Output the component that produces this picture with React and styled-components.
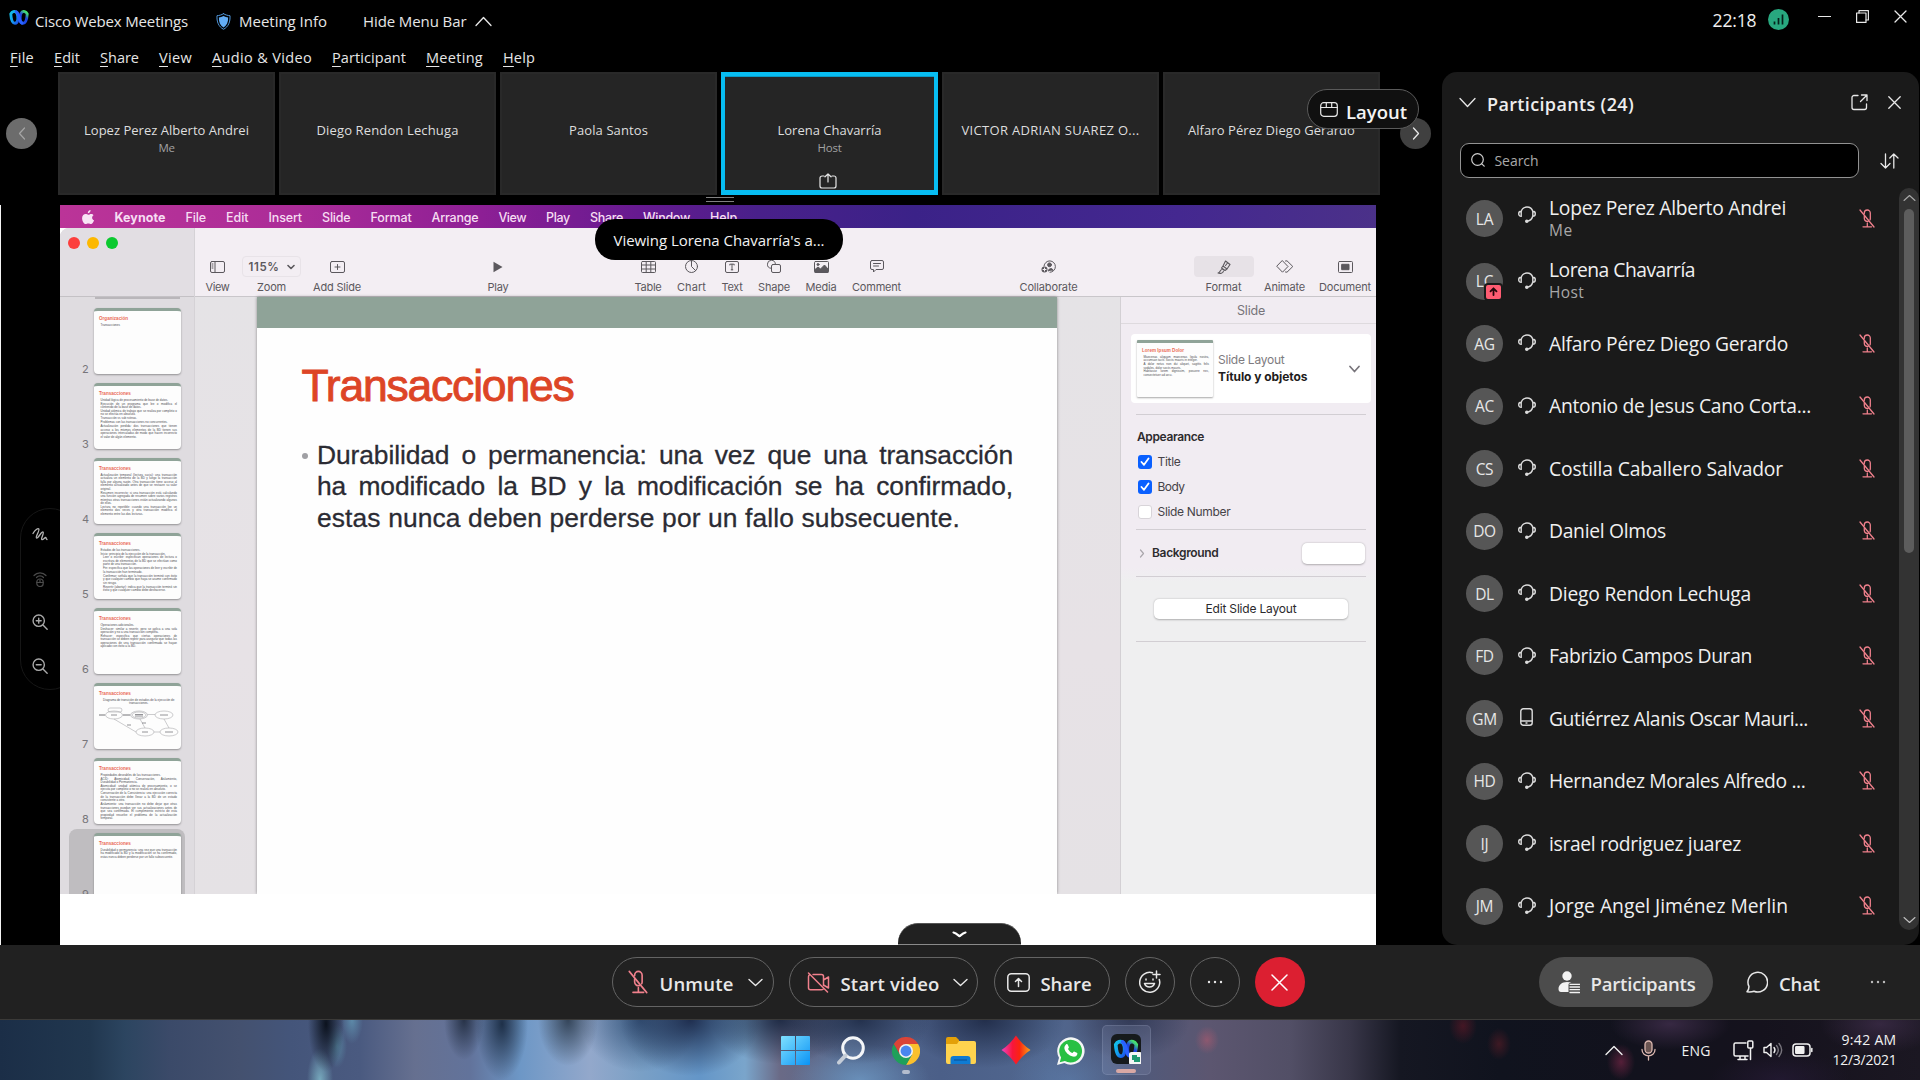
import React, { useLayoutEffect, useRef, useState } from "react";
import styled, { createGlobalStyle, css } from "styled-components";

const Global = createGlobalStyle`
  *, *::before, *::after { box-sizing: border-box; }
  html, body { margin: 0; background: #000; overflow: hidden; }
  body { font-family: "Open Sans", "Noto Sans", sans-serif; color: #e6e6e6; }
  svg { display: block; flex: none; }
`;

/* ---------- text that tracks itself to a given width ---------- */

const FitSpan = styled.span`
  display: inline-block;
  white-space: pre;
  flex: none;
`;

function Fit({ w, children, className }) {
  const ref = useRef(null);
  const [spacing, setSpacing] = useState(null);
  useLayoutEffect(() => {
    if (!w) return;
    const natural = ref.current.getBoundingClientRect().width;
    setSpacing((w - natural) / ref.current.textContent.length);
  }, [w]);
  return (
    <FitSpan ref={ref} className={className} style={spacing === null ? undefined : { letterSpacing: spacing }}>
      {children}
    </FitSpan>
  );
}

function Icon({ w = 16, h = w, vb, stroke = "#e8e8e8", sw = 1.4, fill = "none", children }) {
  return (
    <svg width={w} height={h} viewBox={vb || `0 0 ${w} ${h}`} fill={fill} stroke={stroke} strokeWidth={sw} strokeLinecap="round" strokeLinejoin="round">
      {children}
    </svg>
  );
}

/* ---------- frame ---------- */

const Screen = styled.div`
  width: 1920px;
  height: 1080px;
  display: flex;
  flex-direction: column;
  background: #000;
  overflow: hidden;
`;
const TitleBar = styled.header`
  height: 42px;
  display: flex;
  align-items: center;
  font-size: 15px;
  font-weight: 500;
  padding-left: 9px;
`;
const TitleItem = styled.div`
  display: flex;
  align-items: center;
  gap: ${(p) => p.$gap || 8}px;
  margin-left: ${(p) => p.$ml || 0}px;
`;
const LogoLift = styled.div`
  padding-bottom: 8px;
`;
const Clock = styled(Fit)`
  font-size: 17.5px;
  font-weight: 400;
  color: #f0f0f0;
  margin-left: auto;
  padding-bottom: 2px;
`;
const WindowControls = styled.div`
  display: flex;
  gap: 25px;
  margin: 0 13.5px 9px 29px;
  align-items: center;
`;
const Signal = styled.div`
  margin: 0 0 3px 11px;
`;
const MenuRow = styled.nav`
  height: 30px;
  display: flex;
  align-items: center;
  gap: 20px;
  padding-left: 10px;
  font-size: 14.5px;
  font-weight: 500;
`;
const Mnemonic = styled.span`
  text-decoration: underline;
  text-underline-offset: 3px;
  text-decoration-thickness: 1px;
`;
const Main = styled.main`
  height: 873px;
  display: flex;
`;
const Stage = styled.section`
  width: 1442px;
  display: flex;
  flex-direction: column;
  position: relative;
`;

/* ---------- film strip ---------- */

const Strip = styled.div`
  height: 123px;
  display: flex;
  align-items: center;
`;
const PrevButton = styled.div`
  width: 31px;
  height: 31px;
  margin: 0 21px 0 6px;
  border-radius: 50%;
  background: #6c6c6c;
  display: grid;
  place-items: center;
`;
const Tiles = styled.div`
  display: grid;
  grid-template-columns: repeat(6, 217px);
  gap: 4px;
  height: 123px;
`;
const Tile = styled.div`
  background: #252525;
  border: ${(p) => (p.$active ? "4px solid #07bdf2" : "2px solid #292929")};
  ${(p) => p.$active && css`box-shadow: inset 0 1px 0 #0a9bc8, inset 0 -1px 0 #07bdf2;`}
  display: flex;
  flex-direction: column;
  align-items: center;
  padding-top: ${(p) => (p.$active ? 44 : 46)}px;
  font-size: 13px;
  line-height: 20px;
  color: #dedede;
`;
const TileSub = styled(Fit)`
  font-size: 11.5px;
  line-height: 15px;
  color: #a2a2a2;
`;
const TileShare = styled.div`
  margin: 18px 4px 0 0;
`;
const NextButton = styled.div`
  position: absolute;
  left: 1400px;
  top: 46px;
  width: 31px;
  height: 31px;
  border-radius: 50%;
  background: #404040;
  display: grid;
  place-items: center;
`;
const LayoutPill = styled.div`
  position: absolute;
  left: 1307px;
  top: 17px;
  width: 112px;
  height: 40px;
  border-radius: 20px;
  border: 1px solid #5a5a5a;
  background: #101010;
  display: flex;
  align-items: center;
  padding-left: 12px;
  gap: 8px;
  font-size: 18.5px;
  font-weight: 600;
  color: #f4f4f4;
`;
const LayoutText = styled.div`
  padding-top: 5px;
`;
const Grip = styled.div`
  width: 28px;
  height: 5px;
  margin: 2px 0 3px 706px;
  border: solid #828282;
  border-width: 1px 0;
`;

/* ---------- stage body ---------- */

const StageBody = styled.div`
  height: 740px;
  display: flex;
`;
const Rail = styled.div`
  width: 60px;
  border-left: 1px solid #f4f4f4;
  padding: 303px 0 0 19px;
`;
const RailPill = styled.div`
  width: 60px;
  height: 182px;
  border: 1px solid #161616;
  border-radius: 30px;
  padding: 18px 0 0 11px;
  display: flex;
  flex-direction: column;
  gap: 27.7px;
`;
const Shared = styled.div`
  width: 1316px;
  background: #fff;
  position: relative;
`;
const MacBar = styled.div`
  height: 23px;
  background: linear-gradient(90deg, #bb3498 0%, #ab2c98 18%, #8d1f95 32%, #661a90 44%, #49208a 53%, #3b2288 65%, #442890 85%, #4b3189 100%);
  display: flex;
  align-items: center;
  gap: 20px;
  padding-left: 20.5px;
  padding-top: 1px;
  font-family: Inter, "Open Sans", sans-serif;
  font-size: 12.5px;
  font-weight: 500;
  color: #f6ddf2;
`;
const AppName = styled(Fit)`
  font-weight: 700;
`;
const MacWindow = styled.div`
  height: 666px;
  display: flex;
  overflow: hidden;
  background: #e6e3e6;
  font-family: Inter, "Open Sans", sans-serif;
  border-top-left-radius: 9px;
`;
const Sidebar = styled.div`
  width: 135px;
  background: #dfdce0;
  border-right: 1px solid #d5d2d6;
  flex: none;
`;
const SidebarTop = styled.div`
  height: 69px;
  background: #e2dee3;
  border-bottom: 1px solid #c4c1c5;
  display: flex;
  gap: 7.2px;
  padding: 8.5px 0 0 7.5px;
`;
const Light = styled.span`
  width: 12px;
  height: 12px;
  border-radius: 50%;
  background: ${(p) => p.$c};
`;
const ThumbList = styled.div`
  height: 597px;
  overflow: hidden;
`;
const FirstEdge = styled.div`
  width: 85px;
  height: 2px;
  margin: 0 0 4.5px 35px;
  background: #b9b6ba;
`;
const ThumbRow = styled.div`
  height: 75px;
  width: 116px;
  margin-left: 9px;
  padding: 4.5px 0 0 13px;
  display: flex;
  align-items: flex-start;
  gap: 4px;
  border-radius: 8px;
  background: ${(p) => (p.$on ? "#bfbdc0" : "transparent")};
`;
const ThumbNo = styled.span`
  width: 8px;
  padding-top: 54px;
  font-size: 11px;
  line-height: 14px;
  color: #77757a;
`;
const Thumb = styled.div`
  width: 87px;
  height: 66px;
  border-radius: 4px;
  background: #fdfdfd;
  border-top: 3.5px solid #8fa398;
  box-shadow: 0 1px 2px rgba(0, 0, 0, 0.35);
  padding: 3.5px 4px 0 5px;
  overflow: hidden;
  font-family: "Liberation Sans", sans-serif;
`;
const ThumbTitle = styled.div`
  font-size: 4.6px;
  line-height: 7px;
  font-weight: 700;
  color: #ea6b57;
`;
const ThumbText = styled.div`
  margin: ${(p) => (p.$first ? 2.2 : 0.4)}px 0 0 ${(p) => p.$in || 1.5}px;
  font-size: 3px;
  line-height: 3.5px;
  color: #4c4c52;
  text-align: ${(p) => p.$align || "justify"};
`;
const Work = styled.div`
  flex: 1;
  display: flex;
  flex-direction: column;
`;
const Toolbar = styled.div`
  height: 69px;
  flex: none;
  background: #f3eef3;
  border-bottom: 1px solid #c9c6ca;
  display: flex;
  padding-top: 28px;
`;
const Tool = styled.div`
  display: flex;
  flex-direction: column;
  align-items: center;
  width: ${(p) => p.$w}px;
  margin-left: ${(p) => p.$ml}px;
  flex: none;
  font-size: 11px;
  line-height: 18px;
  color: #5b585d;
`;
const ToolFace = styled.div`
  height: 21px;
  width: ${(p) => p.$w || 20}px;
  border-radius: 4px;
  background: ${(p) => p.$bg || "transparent"};
  border: ${(p) => (p.$box ? "1px solid #e8e3e8" : "none")};
  display: flex;
  gap: 7px;
  align-items: center;
  justify-content: center;
  margin: 0 -20px 1px;
  font-weight: 600;
  font-size: 11.5px;
`;
const Canvas = styled.div`
  flex: 1;
  display: flex;
  background: linear-gradient(180deg, #e5e3e6, #e7e2e6 60%, #e5e2e5);
`;
const Slide = styled.article`
  width: 800px;
  margin-left: 62px;
  height: 597px;
  background: #fefefe;
  border-top: 31px solid #8fa398;
  box-shadow: 0 0 3px rgba(0, 0, 0, 0.4);
  font-family: "Liberation Sans", Arial, sans-serif;
  padding: 32px 44px 0 44.5px;
`;
const SlideTitle = styled.h1`
  margin: 0 0 28px;
  font-size: 44.5px;
  line-height: 52px;
  font-weight: 400;
  color: #dd4526;
  -webkit-text-stroke: 0.9px #dd4526;
`;
const Bullet = styled.div`
  display: flex;
  font-size: 26.4px;
  line-height: 31.4px;
  color: #2b2b33;
  -webkit-text-stroke: 0.3px #2b2b33;
`;
const Dot = styled.i`
  width: 6px;
  height: 6px;
  margin: 13px 9.5px 0 0;
  border-radius: 50%;
  background: #a0a0a4;
`;
const Spread = styled.div`
  width: 696px;
  white-space: nowrap;
  text-align-last: justify;
  letter-spacing: -0.1px;
`;

/* ---------- inspector ---------- */

const Inspector = styled.aside`
  width: 256px;
  margin-left: auto;
  border-left: 1px solid #d3d0d4;
  background: linear-gradient(180deg, #f1ecf2 0, #f1ecf2 270px, #efeff0 285px);
  font-size: 12px;
  color: #464348;
`;
const InspectorTab = styled.div`
  height: 27px;
  border-bottom: 1px solid #dedade;
  display: grid;
  place-items: center;
  padding-left: 5px;
  font-size: 12.5px;
  color: #77747a;
`;
const LayoutCard = styled.div`
  width: 240px;
  height: 69px;
  margin: 10px 0 0 10px;
  background: #fff;
  border-radius: 4px;
  display: flex;
  align-items: center;
  padding: 0 11px 0 6px;
`;
const CardThumb = styled(Thumb)`
  width: 76px;
  height: 57px;
  border-radius: 1px;
  border-top-width: 3px;
`;
const CardText = styled.div`
  margin: 0 auto 0 5px;
  line-height: 16.5px;
  color: #7e7b80;
  display: flex;
  flex-direction: column;
  align-items: flex-start;
`;
const CardName = styled(Fit)`
  font-weight: 700;
  color: #1f1d20;
`;
const Rule = styled.hr`
  width: 230px;
  height: 1px;
  border: 0;
  background: #d2ced3;
  margin: ${(p) => p.$t}px 0 0 15px;
`;
const Heading = styled.div`
  font-weight: 600;
  color: #2d2b2e;
  line-height: 16px;
  margin: ${(p) => p.$m};
`;
const CheckRow = styled.div`
  height: 25px;
  display: flex;
  align-items: center;
  gap: 6px;
  padding-left: 16.5px;
`;
const Box = styled.span`
  width: 14px;
  height: 14px;
  border-radius: 3px;
  display: grid;
  place-items: center;
  background: ${(p) => (p.$on ? "#0a60ff" : "#fff")};
  border: ${(p) => (p.$on ? "none" : "1px solid #d8d4d9")};
`;
const BackgroundRow = styled.div`
  display: flex;
  align-items: center;
  height: 46px;
  padding: 0 11px 0 18px;
  gap: 7px;
`;
const Well = styled.span`
  width: 63px;
  height: 21px;
  margin-left: auto;
  border-radius: 5px;
  background: #fff;
  box-shadow: 0 0.5px 2px rgba(0, 0, 0, 0.28);
`;
const EditButton = styled.div`
  width: 194px;
  height: 20px;
  margin: 22px 0 0 33px;
  border-radius: 5px;
  background: #fff;
  box-shadow: 0 0.5px 2px rgba(0, 0, 0, 0.28);
  display: grid;
  place-items: center;
  padding-bottom: 1px;
  color: #2b292c;
`;
const Viewing = styled.div`
  position: absolute;
  left: 535px;
  top: 14px;
  width: 248px;
  height: 40.5px;
  padding-top: 2px;
  border-radius: 20px;
  background: #000;
  display: grid;
  place-items: center;
  font-size: 15px;
  color: #f2f2f2;
`;
const Collapse = styled.div`
  position: absolute;
  left: 838px;
  bottom: 0;
  width: 123px;
  height: 22px;
  border-radius: 20px 20px 0 0;
  background: #212121;
  border-top: 1.5px solid #555;
  border-bottom: 1px solid #8a8a8a;
  display: grid;
  place-items: center;
`;

/* ---------- participants ---------- */

const Panel = styled.aside`
  width: 477px;
  height: 873px;
  border-radius: 15px;
  background: #1a1a1a;
`;
const PanelHead = styled.div`
  display: flex;
  align-items: center;
  height: 71px;
  padding: 0 18.5px 10px 16.5px;
  font-size: 18px;
  font-weight: 600;
  color: #eee;
`;
const PanelTitle = styled(Fit)`
  margin: 3px auto 0 11.5px;
`;
const HeadIcons = styled.div`
  display: flex;
  align-items: center;
  gap: 20px;
`;
const SearchRow = styled.div`
  display: flex;
  align-items: center;
  padding-left: 17.5px;
  gap: 21px;
`;
const SearchBox = styled.div`
  width: 399px;
  height: 35px;
  border: 1px solid #929292;
  border-radius: 9px;
  background: #000;
  display: flex;
  align-items: center;
  gap: 10px;
  padding: 0 0 1px 10px;
  font-size: 14px;
  color: #a9a9a9;
`;
const ListArea = styled.div`
  margin-top: 9.5px;
  display: flex;
  height: 750px;
`;
const List = styled.div`
  width: 457px;
`;
const PersonRow = styled.div`
  height: 62.5px;
  display: flex;
  align-items: center;
  padding-left: 24px;
`;
const Avatar = styled.div`
  width: 37px;
  height: 37px;
  border-radius: 50%;
  background: #565656;
  display: grid;
  place-items: center;
  font-size: 15.5px;
  letter-spacing: -0.3px;
  color: #e6e6e6;
  position: relative;
`;
const ShareBadge = styled.span`
  position: absolute;
  right: 0;
  bottom: -1px;
  width: 19px;
  height: 18px;
  border-radius: 4px;
  background: #ff5c72;
  border: 2px solid #1a1a1a;
  display: grid;
  place-items: center;
`;
const Device = styled.div`
  width: 18px;
  margin: 0 13.5px ${(p) => p.$lift}px 14.5px;
  display: grid;
  place-items: center;
`;
const Names = styled.div`
  width: 309.5px;
  display: flex;
  flex-direction: column;
  align-items: flex-start;
  line-height: 22px;
  font-size: 19.3px;
  color: #f0f0f0;
`;
const Sub = styled(Fit)`
  font-size: 15.5px;
  line-height: 22px;
  color: #a8a8a8;
`;
const Muted = styled.div`
  padding-bottom: 1.5px;
`;
const Scroll = styled.div`
  width: 20px;
  height: 742px;
  border-radius: 10px;
  background: #333;
  display: flex;
  flex-direction: column;
  align-items: center;
  justify-content: space-between;
  padding: 6px 0 6px;
`;
const ScrollThumb = styled.div`
  width: 10px;
  height: 344px;
  border-radius: 5px;
  background: #5d5d5d;
  margin: 7px 0 auto;
`;

/* ---------- controls ---------- */

const Controls = styled.footer`
  height: 75px;
  background: #212121;
  border-bottom: 1px solid #3b3a38;
  display: flex;
  align-items: center;
  font-size: 18.5px;
  font-weight: 600;
  color: #e8e8e8;
  padding-left: 611.5px;
`;
const Pill = styled.div`
  height: 50px;
  width: ${(p) => p.$w}px;
  margin-right: ${(p) => (p.$mr === undefined ? 15.5 : p.$mr)}px;
  padding-left: ${(p) => p.$pl || 0}px;
  border-radius: 25px;
  border: 1px solid ${(p) => (p.$solid ? "transparent" : "#646464")};
  background: ${(p) => p.$solid || "transparent"};
  background-clip: border-box;
  display: flex;
  align-items: center;
  justify-content: ${(p) => (p.$pl ? "flex-start" : "center")};
  gap: ${(p) => p.$gap || 12}px;
  flex: none;
`;
const Nudge = styled.span`
  padding-top: 2px;
`;
const More = styled.span`
  margin-left: 2px;
`;
const RightTools = styled.div`
  margin-left: 234px;
  display: flex;
  align-items: center;
`;
const ChatTab = styled.div`
  display: flex;
  align-items: center;
  gap: 11px;
  margin: 0 49.5px 0 33.5px;
`;

/* ---------- taskbar ---------- */

const Taskbar = styled.div`
  height: 60px;
  display: flex;
  align-items: center;
  background:
    radial-gradient(18px 48px at 326px 4px, rgba(8, 14, 24, 0.95), transparent),
    radial-gradient(11px 24px at 352px 0, rgba(96, 146, 176, 0.85), transparent),
    radial-gradient(10px 22px at 337px 26px, rgba(90, 140, 166, 0.8), transparent),
    radial-gradient(13px 32px at 320px 60px, rgba(124, 178, 196, 0.9), transparent),
    radial-gradient(20px 40px at 464px 0, rgba(25, 35, 52, 0.8), transparent),
    radial-gradient(26px 56px at 502px 4px, rgba(22, 38, 60, 0.9), transparent),
    radial-gradient(30px 46px at 568px 0, rgba(32, 46, 62, 0.8), transparent),
    radial-gradient(70px 56px at 690px 0, rgba(28, 42, 74, 0.95), transparent),
    radial-gradient(60px 52px at 640px 0, rgba(38, 66, 104, 0.8), transparent),
    radial-gradient(12px 14px at 1207px 20px, rgba(190, 90, 110, 0.5), transparent),
    radial-gradient(70px 44px at 860px 0, rgba(24, 36, 62, 0.8), transparent),
    radial-gradient(80px 48px at 985px 0, rgba(24, 34, 60, 0.8), transparent),
    radial-gradient(70px 44px at 780px 0, rgba(20, 34, 60, 0.85), transparent),
    radial-gradient(60px 40px at 1130px 0, rgba(40, 46, 72, 0.7), transparent),
    radial-gradient(70px 36px at 860px 60px, rgba(120, 170, 215, 0.6), transparent),
    radial-gradient(60px 36px at 1070px 60px, rgba(100, 140, 190, 0.4), transparent),
    radial-gradient(14px 18px at 1463px 6px, rgba(110, 25, 40, 0.55), transparent),
    radial-gradient(12px 16px at 1499px 24px, rgba(100, 30, 40, 0.55), transparent),
    radial-gradient(14px 18px at 1621px 42px, rgba(130, 40, 75, 0.6), transparent),
    radial-gradient(60px 26px at 1670px 4px, rgba(64, 46, 76, 0.8), transparent),
    radial-gradient(60px 30px at 1880px 4px, rgba(60, 44, 72, 0.8), transparent),
    radial-gradient(70px 30px at 1780px 60px, rgba(36, 26, 52, 0.8), transparent),
    linear-gradient(90deg, #1b2e47 0, #21374f 90px, #2c4560 125px, #3b4a69 170px, #44516f 240px, #44557a 290px, #4a5a80 360px, #667090 415px, #62739b 470px, #6d97c6 520px, #93a8cb 590px, #7aa0c6 640px, #6496c8 700px, #7aa5cb 745px, #6a6a86 780px, #53678c 850px, #4b5f88 940px, #51678f 1050px, #4f5a7c 1130px, #5c5670 1210px, #524f66 1290px, #383648 1350px, #151722 1400px, #10131e 1500px, #12121d 1640px, #15121d 1760px, #1b1722 1920px);
`;
const Apps = styled.div`
  display: flex;
  align-items: center;
  gap: 6.1px;
  margin-left: 771px;
`;
const AppSlot = styled.div`
  width: 49px;
  height: 50px;
  border-radius: 5px;
  background: ${(p) => (p.$on ? "rgba(170, 180, 215, 0.16)" : "transparent")};
  border: ${(p) => (p.$on ? "1px solid rgba(200, 205, 230, 0.16)" : "none")};
  display: flex;
  flex-direction: column;
  align-items: center;
  justify-content: flex-end;
  gap: 5px;
  padding-bottom: 1px;
`;
const Mark = styled.span`
  height: 4px;
  width: ${(p) => p.$w}px;
  border-radius: 2px;
  background: ${(p) => p.$c};
`;
const Tray = styled.div`
  margin-left: auto;
  padding-right: 23.5px;
  display: flex;
  align-items: center;
  font-size: 14px;
  color: #f1f1f1;
`;
const TrayItem = styled.div`
  margin-left: ${(p) => p.$ml}px;
`;
const DateTime = styled.div`
  margin-left: 20px;
  display: flex;
  flex-direction: column;
  align-items: flex-end;
  line-height: 20px;
`;

/* ---------- drawings ---------- */

const WebexMark = ({ w, h }) => (
  <svg width={w} height={h} viewBox="0 0 20 16" fill="none" strokeLinecap="round">
    <defs>
      <linearGradient id="wxL" x1="0" y1="0" x2="1" y2="1"><stop offset="0" stopColor="#12c0e8" /><stop offset="0.5" stopColor="#149ff0" /><stop offset="1" stopColor="#1c50e8" /></linearGradient>
      <linearGradient id="wxR" x1="0.2" y1="1" x2="0.7" y2="0"><stop offset="0" stopColor="#1d50f0" /><stop offset="0.6" stopColor="#1f45dd" /><stop offset="1" stopColor="#46e070" /></linearGradient>
    </defs>
    <path d="M18.2 4.500c-.3 5-1.600 9.300-4.200 9.300-3.600 0-3.300-7.500-2-10 .8-1.500 2.300-2 3.600-1.600 1 .3 1.900 1 2.600 2.300z" stroke="url(#wxR)" strokeWidth="2.900" />
    <path d="M1.800 4.500c.3 5 1.600 9.300 4.200 9.300 3.600 0 3.300-7.500 2-10-.8-1.500-2.300-2-3.600-1.600C3.400 2.500 2.500 3.200 1.800 4.500z" stroke="url(#wxL)" strokeWidth="2.900" />
    <path d="M7.200 2.300C9.600 3.800 9.900 7 10.600 10c.4 1.600 1.200 3 2.400 3.600" stroke="#2a62ff" strokeWidth="2.900" />
  </svg>
);

const MicOff = ({ w, h, sw = 1.3 }) => (
  <Icon w={w} h={h} vb="0 0 16 19" stroke="#f0808c" sw={sw}>
    <path d="M1 1l14 17" />
    <path d="M5.300 4.500V4a3 3 0 0 1 6 0v5.500c0 .5-.1 1-.3 1.400M5.300 7v2.500a3 3 0 0 0 3.900 2.800" />
    <path d="M8.300 14v3.500M4 17.800h8.500" />
  </Icon>
);

const Headset = () => (
  <Icon w={18} h={18} stroke="#dcdcdc" sw={1.4}>
    <path d="M3.200 6.500a6 6 0 0 1 11.600 0M3.200 6.200v5.200c-1.500 0-2.500-1.200-2.500-2.600s1-2.600 2.500-2.600zM14.800 6.200v5.200c1.500 0 2.500-1.200 2.500-2.600s-1-2.600-2.500-2.600zM14.600 11.500c-.6 2.400-2.400 4.200-5 4.600" />
    <circle cx="8.800" cy="16.200" r="1.100" fill="#dcdcdc" />
  </Icon>
);

const Phone = () => (
  <Icon w={13} h={18} stroke="#dcdcdc">
    <rect x="0.8" y="0.8" width="11.400" height="16.400" rx="2.500" />
    <path d="M1 13h11M6 15h1" />
  </Icon>
);

const Chevron = ({ w, h, dir = "down", stroke, sw }) => (
  <Icon w={w} h={h} stroke={stroke} sw={sw}>
    {dir === "down" && <path d={`M1 1.500L${w / 2} ${h - 1.5}L${w - 1} 1.500`} />}
    {dir === "up" && <path d={`M1 ${h - 1.5}L${w / 2} 1.500L${w - 1} ${h - 1.5}`} />}
    {dir === "left" && <path d={`M${w - 1.5} 1L1.500 ${h / 2}L${w - 1.5} ${h - 1}`} />}
    {dir === "right" && <path d={`M1.500 1L${w - 1.5} ${h / 2}L1.500 ${h - 1}`} />}
  </Icon>
);

const Dots = ({ c = "#e8e8e8" }) => (
  <Icon w={16} h={4} stroke="none" fill={c}>
    <circle cx="2" cy="2" r="1.200" /><circle cx="8" cy="2" r="1.200" /><circle cx="14" cy="2" r="1.200" />
  </Icon>
);

const Magnifier = ({ minus }) => (
  <Icon w={16} vb="0 0 15 15" stroke="#a9a9a9" sw={1.3}>
    <circle cx="6.300" cy="6.300" r="5.300" />
    <path d={minus ? "M4 6.300h4.600M10.300 10.300L14.200 14.200" : "M4 6.300h4.600M6.300 4v4.600M10.300 10.300L14.200 14.200"} />
  </Icon>
);

/* ---------- data ---------- */

const MENUS = [["File", 24], ["Edit", 26], ["Share", 39], ["View", 33], ["Audio & Video", 100], ["Participant", 74], ["Meeting", 57], ["Help", 32]];
const MAC_MENUS = [["File", 20.5], ["Edit", 22.5], ["Insert", 33.5], ["Slide", 28.5], ["Format", 41], ["Arrange", 47], ["View", 27.5], ["Play", 24], ["Share", 33], ["Window", 47], ["Help", 27]];
const TILES = [
  { n: "Lopez Perez Alberto Andrei", w: 165, sub: "Me", sw: 16 },
  { n: "Diego Rendon Lechuga", w: 142 },
  { n: "Paola Santos", w: 79 },
  { n: "Lorena Chavarría", w: 104, sub: "Host", sw: 24, active: true },
  { n: "VICTOR ADRIAN SUAREZ O...", w: 178 },
  { n: "Alfaro Pérez Diego Gerardo", w: 167 },
];
const PEOPLE = [
  { i: "LA", n: "Lopez Perez Alberto Andrei", w: 237, sub: "Me", sw: 24, lift: 9 },
  { i: "LC", n: "Lorena Chavarría", w: 146, sub: "Host", sw: 35, host: true },
  { i: "AG", n: "Alfaro Pérez Diego Gerardo", w: 239 },
  { i: "AC", n: "Antonio de Jesus Cano Corta...", w: 262 },
  { i: "CS", n: "Costilla Caballero Salvador", w: 234 },
  { i: "DO", n: "Daniel Olmos", w: 117 },
  { i: "DL", n: "Diego Rendon Lechuga", w: 202 },
  { i: "FD", n: "Fabrizio Campos Duran", w: 203 },
  { i: "GM", n: "Gutiérrez Alanis Oscar Mauri...", w: 259, phone: true },
  { i: "HD", n: "Hernandez Morales Alfredo ...", w: 256.5 },
  { i: "IJ", n: "israel rodriguez juarez", w: 192 },
  { i: "JM", n: "Jorge Angel Jiménez Merlin", w: 239 },
];
const THUMBS = [
  { no: 2, title: "Organización", lines: ["Transacciones"] },
  { no: 3, lines: [
    "Unidad lógica de procesamiento de base de datos.",
    "Ejecución de un programa que lee o modifica el contenido de la base de datos.",
    "Unidad atómica de trabajo que se realiza por completo o no se efectúa en absoluto.",
    "Transacción vs sub rutinas.",
    "Problemas con las transacciones no concurrentes.",
    "Actualización perdida: dos transacciones que tienen acceso a los mismos elementos de la BD tienen sus operaciones intercaladas de modo que hacen incorrecto el valor de algún elemento.",
  ] },
  { no: 4, lines: [
    "Actualización temporal (lectura sucia): una transacción actualiza un elemento de la BD y luego la transacción falla por alguna razón. Otra transacción tiene acceso al elemento actualizado antes de que se restaure su valor original.",
    "Resumen incorrecto: si una transacción está calculando una función agregada de resumen sobre varios registros mientras otras transacciones están actualizando algunos de ellos.",
    "Lectura no repetible: cuando una transacción lee un elemento dos veces y otra transacción modifica el elemento entre las dos lecturas.",
  ] },
  { no: 5, lines: [
    "Estados de las transacciones.",
    "Inicio: principio de la ejecución de la transacción.",
    "~Leer o escribir: especifican operaciones de lectura o escritura de elementos de la BD que se efectúan como parte de una transacción.",
    "~Fin: especifica que las operaciones de leer y escribir de la transacción han terminado.",
    "~Confirmar: señala que la transacción terminó con éxito y que cualquier cambio que haya se asume confirmado sin riesgo.",
    "~Revertir (abortar): indica que la transacción terminó sin éxito y que cualquier cambio debe deshacerse.",
  ] },
  { no: 6, lines: [
    "Operaciones adicionales.",
    "Deshacer: similar a revertir, pero se aplica a una sola operación y no a una transacción completa.",
    "Rehacer: especifica que ciertas operaciones de transacción se deben repetir para asegurar que todas las operaciones de una transacción confirmada se hayan aplicado con éxito a la BD.",
  ] },
  { no: 7, diagram: true, lines: ["Diagrama de transición de estados de la ejecución de transacciones."] },
  { no: 8, lines: [
    "Propiedades deseables de las transacciones.",
    "ACID: Atomicidad, Conservación, Aislamiento, Durabilidad o Permanencia.",
    "Atomicidad: unidad atómica de procesamiento, o se ejecuta por completo o no se realiza en absoluto.",
    "Conservación de la Consistencia: una ejecución correcta de la transacción debe llevar a la BD de un estado consistente a otro.",
    "Aislamiento: una transacción no debe dejar que otras transacciones puedan ver sus actualizaciones antes de que sea confirmada. El cumplimiento estricto de esta propiedad resuelve el problema de la actualización temporal.",
  ] },
  { no: 9, on: true, lines: ["Durabilidad o permanencia: una vez que una transacción ha modificado la BD y la modificación se ha confirmado, estas nunca deben perderse por un fallo subsecuente."] },
];

const g = "#5b585d";
const TOOLS = [
  { l: "View", ml: 10.5, w: 24, icon: <Icon w={15} h={12} stroke={g} sw={1}><rect x="0.5" y="0.5" width="14" height="11" rx="1.500" /><path d="M5 .5v11M2 3h1M2 5h1M2 7h1" /></Icon> },
  { l: "Zoom", ml: 27.5, w: 29, face: 59, box: true, icon: <><Fit w={31}>115%</Fit><Chevron w={8} h={6} stroke={g} sw={1.6} /></> },
  { l: "Add Slide", ml: 27, w: 48, icon: <Icon w={15} h={12} stroke={g} sw={1}><rect x="0.5" y="0.5" width="14" height="11" rx="1.500" /><path d="M7.500 3.500v5M5 6h5" /></Icon> },
  { l: "Play", ml: 126.5, w: 21, icon: <Icon w={10} h={12} stroke="none" fill={g}><path d="M.5 .8L9.500 6L.5 11.200z" /></Icon> },
  { l: "Table", ml: 126, w: 27, icon: <Icon w={15} h={12} stroke={g} sw={1}><rect x="0.5" y="0.5" width="14" height="11" rx="1" /><path d="M.5 4h14M.5 8h14M5.200 .5v11M9.800 .5v11" /></Icon> },
  { l: "Chart", ml: 15.5, w: 29, icon: <Icon w={13} stroke={g} sw={1}><circle cx="6.500" cy="6.500" r="6" /><path d="M6.500 .5v6l4.200 4.200" /></Icon> },
  { l: "Text", ml: 15.5, w: 21, icon: <Icon w={14} h={12} stroke={g} sw={1}><rect x="0.5" y="0.5" width="13" height="11" rx="1.500" /><path d="M4.800 4V3.200h4.400V4M7 3.200v5.600M6.200 8.800h1.600" /></Icon> },
  { l: "Shape", ml: 15.5, w: 32, icon: <Icon w={14} h={13} stroke={g} sw={1}><path d="M4 8.300A4 4 0 1 1 8.400 4" /><rect x="4.500" y="4.500" width="9" height="8" rx="1.500" /></Icon> },
  { l: "Media", ml: 15.5, w: 31, icon: <Icon w={15} h={12} stroke={g} sw={1}><rect x="0.5" y="0.5" width="14" height="11" rx="1" /><circle cx="4" cy="3.500" r="1" fill={g} /><path d="M1 11V8.500L4 6l2.500 2L10.500 4l3.500 4v3z" fill={g} /></Icon> },
  { l: "Comment", ml: 15.5, w: 49, icon: <Icon w={14} h={13} stroke={g} sw={1}><path d="M2 .5h10a1.500 1.500 0 0 1 1.500 1.500v6A1.500 1.500 0 0 1 12 9.500H6L3.500 12V9.500H2A1.500 1.500 0 0 1 .5 8V2A1.500 1.500 0 0 1 2 .5zM3.500 3.500h7M3.500 6h5" /></Icon> },
  { l: "Collaborate", ml: 118.5, w: 58, icon: <Icon w={15} h={13} stroke={g} sw={1}><path d="M3 6a5.700 5.700 0 1 1 6 6.300" /><circle cx="8.500" cy="4.800" r="1.900" fill={g} /><path d="M7.500 11c-.5-3 4.500-3.500 4.500-.5" fill={g} /><circle cx="3.500" cy="9.500" r="3" fill={g} stroke="none" /><path d="M3.500 8v3M2 9.500h3" stroke="#f3eef3" /></Icon> },
  { l: "Format", ml: 128, w: 36, face: 60, bg: "#e7e2e7", icon: <Icon w={14} h={14} stroke={g} sw={1.1}><path d="M8.500 1l4.500 3.500-3 4.500L6 6zM8.500 5.500l2-2.500M6 6L4.500 8l3.500 2.500L10 9M5 9.500c-2 0-1.500 3-4 3.500 2 .8 5 .5 5.500-2" /></Icon> },
  { l: "Animate", ml: 22.5, w: 41, icon: <Icon w={18} h={13} stroke={g} sw={1}><path d="M6.500 .8L12 6.500 6.500 12.200 1 6.500zM9.500 1l1.500-.2L16.800 6.500 11 12.200l-1.500-.2" /></Icon> },
  { l: "Document", ml: 14, w: 52, icon: <Icon w={15} h={12} stroke={g} sw={1}><rect x="0.5" y="0.5" width="14" height="11" rx="1" /><rect x="4" y="3.300" width="7" height="5.400" fill={g} /></Icon> },
];

/* ---------- sections ---------- */

function TopBar() {
  return (
    <>
      <TitleBar>
        <TitleItem $gap={6}>
          <LogoLift><WebexMark w={20} h={17} /></LogoLift>
          <Fit w={153}>Cisco Webex Meetings</Fit>
        </TitleItem>
        <TitleItem $ml={28}>
          <Icon w={15} h={17} stroke="#4f95d8" sw={1}>
            <path d="M7.500 .7C5.500 2 3 2.600 1 2.700c-.4 6 1.500 11 6.500 13.600C12.500 13.700 14.400 8.700 14 2.700c-2-.1-4.500-.7-6.500-2z" />
            <path d="M7.500 2.900C6 3.800 4.300 4.300 2.900 4.400c-.2 4.600 1.300 8 4.600 10 3.300-2 4.800-5.400 4.600-10-1.400-.1-3.100-.6-4.600-1.500z" fill="#63adf5" stroke="none" />
          </Icon>
          <Fit w={88}>Meeting Info</Fit>
        </TitleItem>
        <TitleItem $ml={36}>
          <Fit w={103.5}>Hide Menu Bar</Fit>
          <Chevron w={17} h={11} dir="up" sw={1.3} />
        </TitleItem>
        <Clock w={44}>22:18</Clock>
        <Signal>
          <svg width="21" height="21" viewBox="0 0 21 21">
            <circle cx="10.500" cy="10.500" r="10.500" fill="#28a87f" />
            <path d="M6.500 15.500v-3M10.500 15.500V9M14.500 15.500V5.500" stroke="#04211a" strokeWidth="1.700" />
          </svg>
        </Signal>
        <WindowControls>
          <Icon w={13} sw={1.2}><path d="M0 6.500h13" /></Icon>
          <Icon w={13} sw={1.2}><rect x="0.6" y="3" width="9.400" height="9.400" /><path d="M3 3V.6h9.400V10H10" /></Icon>
          <Icon w={13} sw={1.3}><path d="M1 1l11 11M12 1L1 12" /></Icon>
        </WindowControls>
      </TitleBar>
      <MenuRow>
        {MENUS.map(([t, w]) => (
          <Fit key={t} w={w}><Mnemonic>{t[0]}</Mnemonic>{t.slice(1)}</Fit>
        ))}
      </MenuRow>
    </>
  );
}

function FilmStrip() {
  return (
    <>
      <Strip>
        <PrevButton><Chevron w={8} h={13} dir="left" stroke="#a5a5a5" sw={1.2} /></PrevButton>
        <Tiles>
          {TILES.map((t) => (
            <Tile key={t.n} $active={t.active}>
              <Fit w={t.w}>{t.n}</Fit>
              {t.sub && <TileSub w={t.sw}>{t.sub}</TileSub>}
              {t.active && (
                <TileShare>
                  <Icon w={18} h={16} sw={1.2}><path d="M5 3H3a2 2 0 0 0-2 2v8a2 2 0 0 0 2 2h12a2 2 0 0 0 2-2V5a2 2 0 0 0-2-2h-2M9 9V1M6 3.800L9 1l3 2.800" /></Icon>
                </TileShare>
              )}
            </Tile>
          ))}
        </Tiles>
      </Strip>
      <Grip />
      <NextButton><Chevron w={8} h={13} dir="right" sw={1.3} /></NextButton>
      <LayoutPill>
        <Icon w={18} h={15} sw={1.2}><rect x="0.7" y="0.7" width="16.600" height="13.600" rx="3" /><path d="M.7 5.500h16.600M6.300 .7v4.800M11.700 .7v4.800" /></Icon>
        <LayoutText><Fit w={61}>Layout</Fit></LayoutText>
      </LayoutPill>
    </>
  );
}

function StateDiagram() {
  return (
    <svg width="80" height="34" viewBox="0 0 80 34" fill="none" stroke="#9a9a9e" strokeWidth="0.5">
      <rect x="9" y="2" width="14" height="4" rx="2" />
      <ellipse cx="15" cy="9" rx="8.500" ry="4" /><ellipse cx="40" cy="9" rx="8.500" ry="4" /><ellipse cx="40" cy="9" rx="7" ry="3" />
      <ellipse cx="65" cy="9" rx="9" ry="4" /><ellipse cx="46" cy="26" rx="9" ry="4" /><ellipse cx="70" cy="26" rx="9" ry="4" />
      <path d="M0 9h6.500M23.500 9h8M48.500 8.500h7.500M55 26h6M15 13l22 13M41 13l5 9M65 13l5 9" />
      <path d="M12 9h6M36 8.500h8M36 10h8M61 9h8M43 26h6M66 26h8M0 9h6M24 9h7M28 19h4M43 17h4" stroke="#77777c" strokeWidth="0.8" />
    </svg>
  );
}

function Keynote() {
  return (
    <Shared>
      <MacBar>
        <Icon w={14} h={15} vb="0 0 14 16" stroke="none" fill="#f8e4f5">
          <path d="M9.800 0c.1 1.800-1.400 3.400-3 3.400C6.600 1.800 8.200.2 9.800 0zM12.900 5.500c-2.200 1.400-1.900 4.500.6 5.400-.6 1.700-1.900 4-3.300 4.100-1.100 0-1.500-.7-2.900-.7s-1.800.7-2.900.7C2.700 15 .6 11.500.7 8.500.8 5.700 2.700 4.300 4.400 4.300c1.200 0 2 .7 2.900.7.900 0 1.700-.8 3.200-.8 1 0 1.900.5 2.400 1.300z" />
        </Icon>
        <AppName w={51}>Keynote</AppName>
        {MAC_MENUS.map(([t, w]) => <Fit key={t} w={w}>{t}</Fit>)}
      </MacBar>
      <MacWindow>
        <Sidebar>
          <SidebarTop><Light $c="#fc3e3d" /><Light $c="#fdb800" /><Light $c="#0bc92f" /></SidebarTop>
          <ThumbList>
            <FirstEdge />
            {THUMBS.map((t) => (
              <ThumbRow key={t.no} $on={t.on}>
                <ThumbNo>{t.no}</ThumbNo>
                <Thumb>
                  <ThumbTitle>{t.title || "Transacciones"}</ThumbTitle>
                  {t.lines.map((s, i) => (
                    <ThumbText key={s} $first={i === 0} $in={s[0] === "~" ? 4 : 1.5} $align={t.diagram && "center"}>{s.replace("~", "")}</ThumbText>
                  ))}
                  {t.diagram && <StateDiagram />}
                </Thumb>
              </ThumbRow>
            ))}
          </ThumbList>
        </Sidebar>
        <Work>
          <Toolbar>
            {TOOLS.map((t) => (
              <Tool key={t.l} $w={t.w} $ml={t.ml}>
                <ToolFace $w={t.face} $box={t.box} $bg={t.bg}>{t.icon}</ToolFace>
                <Fit w={t.w}>{t.l}</Fit>
              </Tool>
            ))}
          </Toolbar>
          <Canvas>
            <Slide>
              <SlideTitle><Fit w={272}>Transacciones</Fit></SlideTitle>
              <Bullet>
                <Dot />
                <div>
                  <Spread>Durabilidad o permanencia: una vez que una transacción</Spread>
                  <Spread>ha modificado la BD y la modificación se ha confirmado,</Spread>
                  <Fit w={643}>estas nunca deben perderse por un fallo subsecuente.</Fit>
                </div>
              </Bullet>
            </Slide>
            <Inspector>
              <InspectorTab><Fit w={28}>Slide</Fit></InspectorTab>
              <LayoutCard>
                <CardThumb>
                  <ThumbTitle>Lorem Ipsum Dolor</ThumbTitle>
                  <ThumbText $first>Maecenas aliquam maecenas ligula nostra, accumsan taciti. Sociis mauris in integer.</ThumbText>
                  <ThumbText>A dolor netus non dui aliquet, sagittis felis sodales, dolor sociis mauris.</ThumbText>
                  <ThumbText>Habitasse lorem dignissim, posuere nec, consectetuer ad arcu.</ThumbText>
                </CardThumb>
                <CardText>
                  <Fit w={66.5}>Slide Layout</Fit>
                  <CardName w={89.5}>Título y objetos</CardName>
                </CardText>
                <Chevron w={11} h={8} stroke="#77747a" sw={1.7} />
              </LayoutCard>
              <Rule $t={11} />
              <Heading $m="14px 0 4px 16px"><Fit w={67}>Appearance</Fit></Heading>
              {[["Title", 23, true], ["Body", 27, true], ["Slide Number", 73, false]].map(([t, w, on]) => (
                <CheckRow key={t}>
                  <Box $on={on}>{on && <Icon w={10} h={9} stroke="#fff" sw={1.8}><path d="M1.500 5l2.500 2.800L8.500 1.500" /></Icon>}</Box>
                  <Fit w={w}>{t}</Fit>
                </CheckRow>
              ))}
              <Rule $t={5} />
              <BackgroundRow>
                <Chevron w={6} h={9} dir="right" stroke="#aaa7ac" sw={1.2} />
                <Heading $m="0"><Fit w={66.5}>Background</Fit></Heading>
                <Well />
              </BackgroundRow>
              <Rule $t={0} />
              <EditButton><Fit w={91}>Edit Slide Layout</Fit></EditButton>
              <Rule $t={22} />
            </Inspector>
          </Canvas>
        </Work>
      </MacWindow>
      <Viewing><Fit w={211}>Viewing Lorena Chavarría's a...</Fit></Viewing>
      <Collapse><Icon w={15} h={7} stroke="#fff" sw={2.2}><path d="M1.500 1.500C4 2 6 4 7.500 5.200 9 4 11 2 13.500 1.500" /></Icon></Collapse>
    </Shared>
  );
}

function Participants() {
  return (
    <Panel>
      <PanelHead>
        <Chevron w={17} h={11} sw={1.3} />
        <PanelTitle w={147}>Participants (24)</PanelTitle>
        <HeadIcons>
          <Icon w={17} sw={1.3}><path d="M7 1.500H3a2 2 0 0 0-2 2v10a2 2 0 0 0 2 2h10.500a2 2 0 0 0 2-2V10M10.500 1h5.500v5.500M15.800 1.200L9.500 7.500" /></Icon>
          <Icon w={13} sw={1.3}><path d="M.8 .8l11.400 11.400M12.200 .8L.8 12.200" /></Icon>
        </HeadIcons>
      </PanelHead>
      <SearchRow>
        <SearchBox>
          <Icon w={14} stroke="#cfcfcf" sw={1.2}><circle cx="6.500" cy="6.500" r="5.800" /><path d="M10.800 10.800L13.200 13.200" /></Icon>
          <Fit w={44}>Search</Fit>
        </SearchBox>
        <Icon w={19} h={16} sw={1.3}><path d="M5.500 1v14M1 10.500L5.500 15 10 10.500M13.800 15V1M9.800 5L13.800 1 18 5" /></Icon>
      </SearchRow>
      <ListArea>
        <List>
          {PEOPLE.map((p) => (
            <PersonRow key={p.n}>
              <Avatar>
                {p.i}
                {p.host && <ShareBadge><Icon w={9} h={9} stroke="#26080c" sw={1.8}><path d="M4.500 8V1.500M1.500 4.300L4.500 1.300l3 3" /></Icon></ShareBadge>}
              </Avatar>
              <Device $lift={p.lift || 3}>{p.phone ? <Phone /> : <Headset />}</Device>
              <Names>
                <Fit w={p.w}>{p.n}</Fit>
                {p.sub && <Sub w={p.sw}>{p.sub}</Sub>}
              </Names>
              {!p.host && <Muted><MicOff w={16} h={19} /></Muted>}
            </PersonRow>
          ))}
        </List>
        <Scroll>
          <Chevron w={13} h={8} dir="up" stroke="#aaa" sw={1.1} />
          <ScrollThumb />
          <Chevron w={13} h={8} stroke="#c0c0c0" sw={1.1} />
        </Scroll>
      </ListArea>
    </Panel>
  );
}

function ControlBar() {
  return (
    <Controls>
      <Pill $w={162} $pl={15}>
        <MicOff w={20} h={24} />
        <Nudge><Fit w={74}>Unmute</Fit></Nudge>
        <More><Chevron w={15} h={9} sw={1.4} /></More>
      </Pill>
      <Pill $w={189} $pl={16.5} $gap={11}>
        <Icon w={23} h={21} stroke="#f0808c" sw={1.5}>
          <path d="M1.500 1l19 19M6 2.500h8.500a2 2 0 0 1 2 2v9M16 17.200c-.4.400-.9.600-1.500.6H3.500a2 2 0 0 1-2-2v-11c0-.8.400-1.500 1-1.900M16.500 8l5-3v11l-5-3" />
        </Icon>
        <Nudge><Fit w={99}>Start video</Fit></Nudge>
        <More><Chevron w={15} h={9} sw={1.4} /></More>
      </Pill>
      <Pill $w={116} $pl={12} $gap={11}>
        <Icon w={23} h={19} sw={1.5}><rect x="0.8" y="0.8" width="21.400" height="17.400" rx="3.500" /><path d="M11.500 13.500V6M8.500 8.500l3-3 3 3" /></Icon>
        <Nudge><Fit w={51}>Share</Fit></Nudge>
      </Pill>
      <Pill $w={49.5}>
        <Icon w={24} h={24} sw={1.5}>
          <path d="M14.500 2.700A10 10 0 1 0 21.300 9.500M18.500 1v7M15 4.500h7M6.500 13.500a5.300 5.300 0 0 0 10 0z" />
          <path d="M8 9v1M15 9v1" />
        </Icon>
      </Pill>
      <Pill $w={49.5}><Dots /></Pill>
      <Pill $w={49.5} $solid="#dc1f31" $mr={0}>
        <Icon w={17} stroke="#fff" sw={1.5}><path d="M1 1l15 15M16 1L1 16" /></Icon>
      </Pill>
      <RightTools>
        <Pill $w={174} $pl={18} $gap={11} $solid="#4c4c4c" $mr={0}>
          <Icon w={22} h={23} stroke="none" fill="#f2f2f2">
            <circle cx="9" cy="5" r="4.700" />
            <path d="M.5 18C.5 13.800 4 11 9 11c1.800 0 3.300.4 4.500 1H12a1.500 1.500 0 0 0-1.500 1.500V21H3C1.500 21 .5 20 .5 18z" />
            <path d="M12 13.300h9.500M12 16h9.500M12 18.700h9.500M12 21.500h9.500" stroke="#f2f2f2" strokeWidth="1.300" />
          </Icon>
          <Nudge><Fit w={105}>Participants</Fit></Nudge>
        </Pill>
        <ChatTab>
          <Icon w={22} h={22} sw={1.5}><path d="M3 15.500A9.800 9.800 0 1 1 8 20.200c-2 .8-4.500.9-7 .6 1.300-1.500 2-3.200 2-5.300z" /></Icon>
          <Nudge><Fit w={41}>Chat</Fit></Nudge>
        </ChatTab>
        <Dots c="#bdbdbd" />
      </RightTools>
    </Controls>
  );
}

function WindowsBar() {
  return (
    <Taskbar>
      <Apps>
        <AppSlot>
          <svg width="29" height="29" viewBox="0 0 29 29">
            <defs><linearGradient id="win" x1="0" y1="0" x2="1" y2="1"><stop offset="0" stopColor="#7fe0ff" /><stop offset="1" stopColor="#0a93f5" /></linearGradient></defs>
            <path fill="url(#win)" d="M1 0h13v14H0V1a1 1 0 0 1 1-1zM15 0h13a1 1 0 0 1 1 1v13H15zM0 15h14v14H1a1 1 0 0 1-1-1zM15 15h14v13a1 1 0 0 1-1 1H15z" />
          </svg>
          <Mark $w={0} />
        </AppSlot>
        <AppSlot>
          <Icon w={28} h={29} stroke="#dfe4ea" sw={3}><circle cx="16" cy="12" r="10.300" fill="rgba(120,150,190,.35)" stroke="#f4f6f8" /><path d="M8.500 19.500L2 26.500" stroke="#c5cdd8" strokeWidth="4" /></Icon>
          <Mark $w={0} />
        </AppSlot>
        <AppSlot>
          <svg width="28" height="28" viewBox="0 0 48 48">
            <path fill="#fbc02d" d="M24 12H44.800A24 24 0 0 1 24 48L34.400 30z" />
            <path fill="#1fa05a" d="M34.400 30L24 48A24 24 0 0 1 3.200 12L13.600 30z" />
            <path fill="#db4437" d="M13.600 30L3.200 12A24 24 0 0 1 44.800 12H24z" />
            <circle cx="24" cy="24" r="12" fill="#f1f1f1" /><circle cx="24" cy="24" r="9.300" fill="#4a86ef" />
          </svg>
          <Mark $w={8} $c="#b4bdce" />
        </AppSlot>
        <AppSlot>
          <svg width="30" height="28" viewBox="0 0 30 28">
            <path fill="#e3a008" d="M0 2a2 2 0 0 1 2-2h8l3 3v6H0z" />
            <path fill="#ffd34e" d="M0 7h11l2-3h15a2 2 0 0 1 2 2v19a2 2 0 0 1-2 2H2a2 2 0 0 1-2-2z" />
            <path fill="#0f7bd3" d="M4.500 27v-5a3 3 0 0 1 3-3h14a3 3 0 0 1 3 3v5z" />
            <path stroke="#0a4f92" strokeWidth="1" d="M8 23h13" />
          </svg>
          <Mark $w={0} />
        </AppSlot>
        <AppSlot>
          <svg width="30" height="30" viewBox="0 0 30 30">
            <defs><linearGradient id="dia" x1="0" y1="0" x2="1" y2="0"><stop offset="0.05" stopColor="#f03fb0" /><stop offset="0.38" stopColor="#f8163c" /><stop offset="0.62" stopColor="#fb2410" /><stop offset="1" stopColor="#fba31b" /></linearGradient></defs>
            <path fill="url(#dia)" d="M15 .5c3.500 5.500 9 11 14.500 14.500C24 18.500 18.500 24 15 29.500 11.500 24 6 18.500.5 15 6 11.500 11.500 6 15 .5z" />
          </svg>
          <Mark $w={0} />
        </AppSlot>
        <AppSlot>
          <svg width="28" height="28" viewBox="0 0 28 28">
            <path fill="#f4f6f5" d="M0 28l2-7.200A13.700 13.700 0 1 1 7.300 26z" />
            <path fill="#27c044" d="M2.800 25.200l1.300-4.800A11.400 11.400 0 1 1 7.900 24z" />
            <path fill="#fff" d="M9 7.500c.6-.6 1.500-.5 1.800.2l1 2.300c.2.500 0 .9-.8 1.900 1 2 2.500 3.300 4.600 4.200.9-1.200 1.300-1.700 1.900-1.400l2.300 1.100c.6.300.7.600.5 1.400-.5 2-2.600 2.900-4.500 2.400-4-1-7.400-4.300-8.300-7.600-.4-1.700.3-3.400 1.500-4.500z" />
          </svg>
          <Mark $w={0} />
        </AppSlot>
        <AppSlot $on>
          <svg width="30" height="30" viewBox="0 0 30 30">
            <rect width="30" height="30" rx="6" fill="#161a1c" />
            <g transform="translate(2 5)"><WebexMark w={26} h={20} /></g>
            <rect x="18" y="18" width="13" height="13" rx="2.500" fill="#f4f6f5" />
            <path fill="#1f9a72" d="M21 21h5v2h3v5h-6v-2h-2z" />
          </svg>
          <Mark $w={20} $c="#d9a8a4" />
        </AppSlot>
      </Apps>
      <Tray>
        <Chevron w={18} h={11} dir="up" stroke="#f1f1f1" sw={1.4} />
        <TrayItem $ml={18}>
          <Icon w={15} h={21} stroke="#dcb8b0" sw={1.3}><rect x="4" y="1" width="7" height="12" rx="3.500" fill="#6a5552" /><path d="M1 9.500c0 8.500 13 8.500 13 0M7.500 16v4" /></Icon>
        </TrayItem>
        <TrayItem $ml={26}><Fit w={29}>ENG</Fit></TrayItem>
        <TrayItem $ml={22}>
          <Icon w={21} h={21} stroke="#f1f1f1" sw={1.5}><path d="M13 3H2.500A1.500 1.500 0 0 0 1 4.500v10A1.500 1.500 0 0 0 2.500 16H15M5 19.500h9M7 16v3M12 16v3M17.500 8.500v11" /><rect x="14.800" y="1" width="5" height="7" rx="1" /></Icon>
        </TrayItem>
        <TrayItem $ml={9}>
          <Icon w={20} h={16} stroke="#f1f1f1" sw={1.4}><path d="M1 5.500h2.500L8 1.500v13L3.500 10.500H1zM11 5.500c1.200 1.500 1.200 3.500 0 5" /><path d="M13.500 3.500c2.200 2.700 2.200 6.300 0 9M16 1.500c3.300 4 3.300 9 0 13" stroke="#77747c" /></Icon>
        </TrayItem>
        <TrayItem $ml={9}>
          <Icon w={21} h={14} stroke="#f1f1f1" sw={1.5}><rect x="1" y="1" width="17" height="12" rx="3" /><rect x="3.800" y="3.800" width="8" height="6.400" rx="0.500" fill="#f1f1f1" /><path d="M19.800 5.500v3" /></Icon>
        </TrayItem>
        <DateTime>
          <Fit w={55}>9:42 AM</Fit>
          <Fit w={64}>12/3/2021</Fit>
        </DateTime>
      </Tray>
    </Taskbar>
  );
}

export default function App() {
  return (
    <Screen>
      <Global />
      <TopBar />
      <Main>
        <Stage>
          <FilmStrip />
          <StageBody>
            <Rail>
              <RailPill>
                <Icon w={16} h={16} stroke="#b5b5b5" sw={1.3}><path d="M1 6.500C3 3 6 1 6.800 2 8 3.500 3 10 4.500 11 6 12 9.500 4 11 5c1.500 1-2.500 6.500-1.200 7.500 1.200.8 2.800-2 3.800-2 1 .2.200 1.800 1.400 2" /></Icon>
                <Icon w={16} h={16} stroke="#4a4a4a" sw={1.2}><path d="M2 4.500a8 8 0 0 1 12 0M4.500 6.500a4.500 4.500 0 0 1 7 0" /><rect x="4.800" y="8" width="6.400" height="7.500" rx="3" /><path d="M4.800 11.500h6.400M8 9v2" /></Icon>
                <Magnifier />
                <Magnifier minus />
              </RailPill>
            </Rail>
            <Keynote />
          </StageBody>
        </Stage>
        <Participants />
      </Main>
      <ControlBar />
      <WindowsBar />
    </Screen>
  );
}
